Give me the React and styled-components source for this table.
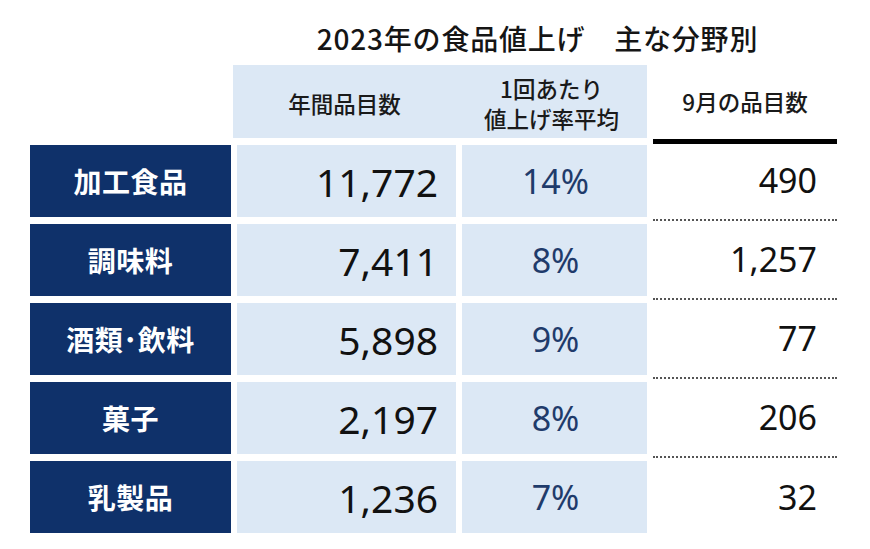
import React from "react";
import styled, { createGlobalStyle } from "styled-components";

const Global = createGlobalStyle`
  html, body { margin: 0; padding: 0; background: #ffffff; }
  body { font-family: "Noto Sans CJK JP", "Noto Sans", sans-serif; }
`;

const NAVY = "#0f316a";
const LIGHT = "#dce8f5";
const COLS = "201px 219px 185px 184px";

const Page = styled.div`
  width: 870px;
  height: 549px;
  padding-left: 30px;
  box-sizing: border-box;
  overflow: hidden;
`;

const Title = styled.h1`
  margin: 0 0 0 207px;
  width: 601px;
  height: 65px;
  display: flex;
  align-items: center;
  justify-content: center;
  padding-top: 11px;
  box-sizing: border-box;
  font-family: "Noto Sans CJK JP", sans-serif;
  font-weight: 500;
  font-size: 28px;
  color: #151515;
  letter-spacing: 0.8px;
  white-space: pre;
`;

const Table = styled.div`
  display: flex;
  flex-direction: column;
  gap: 7px;
`;

const Row = styled.div`
  display: grid;
  grid-template-columns: ${COLS};
  column-gap: 6px;
  height: ${(p) => (p.$header ? "79px" : "72px")};
  margin-bottom: ${(p) => (p.$header ? "-6px" : "0")};
`;

const HeaderBand = styled.div`
  grid-column: 2 / 4;
  margin-left: -4px;
  height: 73px;
  background: ${LIGHT};
  display: grid;
  grid-template-columns: 223px 1fr;
`;

const HeaderText = styled.div`
  display: flex;
  align-items: center;
  justify-content: center;
  text-align: center;
  font-family: "Noto Sans CJK JP", sans-serif;
  font-weight: 500;
  font-size: 22.5px;
  line-height: 30px;
  color: #1a1a1a;
  padding-top: 2px;
`;

const HeaderPlain = styled(HeaderText)`
  border-bottom: 5px solid #000;
  padding-top: 0;
  padding-bottom: 2px;
`;

const Label = styled.div`
  background: ${NAVY};
  color: #ffffff;
  display: flex;
  align-items: center;
  justify-content: center;
  font-family: "Noto Sans CJK JP", sans-serif;
  font-weight: 700;
  font-size: 28px;
  letter-spacing: 0.5px;
`;

const Count = styled.div`
  background: ${LIGHT};
  display: flex;
  align-items: center;
  justify-content: flex-end;
  padding-right: 18px;
  font-family: "Noto Sans", "Noto Sans CJK JP", sans-serif;
  font-size: 39px;
  color: #111;
`;

const Rate = styled.div`
  background: ${LIGHT};
  display: flex;
  align-items: center;
  justify-content: center;
  font-family: "Noto Sans", "Noto Sans CJK JP", sans-serif;
  font-size: 34px;
  color: #1f3b6b;
  padding-left: 2px;
`;

const Sept = styled.div`
  display: flex;
  align-items: center;
  justify-content: flex-end;
  padding-right: 20px;
  padding-bottom: ${(p) => (p.$last ? "0" : "4px")};
  margin-bottom: ${(p) => (p.$last ? "0" : "-4px")};
  border-bottom: ${(p) => (p.$last ? "none" : "2px dotted #555")};
  font-family: "Noto Sans", "Noto Sans CJK JP", sans-serif;
  font-size: 34px;
  color: #111;
`;

const data = [
  { label: "加工食品", count: "11,772", rate: "14%", sept: "490" },
  { label: "調味料", count: "7,411", rate: "8%", sept: "1,257" },
  { label: "酒類･飲料", count: "5,898", rate: "9%", sept: "77" },
  { label: "菓子", count: "2,197", rate: "8%", sept: "206" },
  { label: "乳製品", count: "1,236", rate: "7%", sept: "32" },
];

export default function App() {
  return (
    <>
      <Global />
      <Page>
        <Title>{"2023年の食品値上げ　主な分野別"}</Title>
        <Table>
          <Row $header>
            <div />
            <HeaderBand>
              <HeaderText>年間品目数</HeaderText>
              <HeaderText>
                1回あたり
                <br />
                値上げ率平均
              </HeaderText>
            </HeaderBand>
            <HeaderPlain>9月の品目数</HeaderPlain>
          </Row>
          {data.map((d, i) => (
            <Row key={d.label}>
              <Label>{d.label}</Label>
              <Count>{d.count}</Count>
              <Rate>{d.rate}</Rate>
              <Sept $last={i === data.length - 1}>{d.sept}</Sept>
            </Row>
          ))}
        </Table>
      </Page>
    </>
  );
}
